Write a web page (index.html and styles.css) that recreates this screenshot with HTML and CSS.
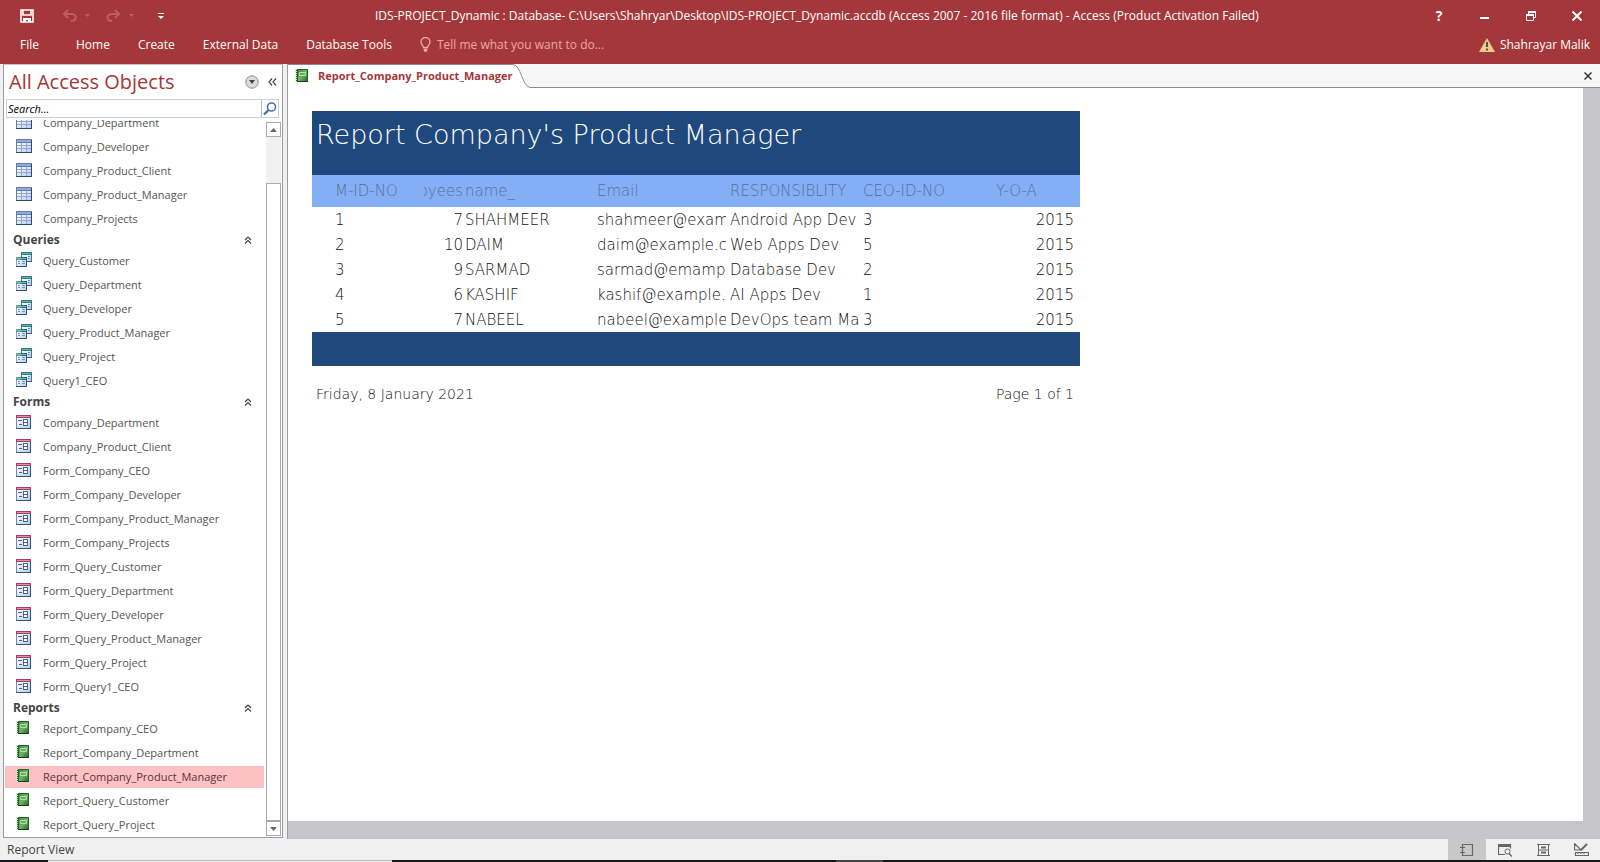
FILE: index.html
```html
<!DOCTYPE html>
<html lang="en">
<head>
<meta charset="utf-8">
<title>IDS-PROJECT_Dynamic - Access</title>
<link rel="stylesheet" href="styles.css">
</head>
<body>
<svg class="defs" width="0" height="0" aria-hidden="true">
  <defs>
    <linearGradient id="cell" x1="0" y1="0" x2="1" y2="1"><stop offset="0" stop-color="#fff"/><stop offset="1" stop-color="#b9cdf0"/></linearGradient>
    <linearGradient id="book" x1="0" y1="0" x2="1" y2="1"><stop offset="0" stop-color="#3f8a3c"/><stop offset=".5" stop-color="#6db565"/><stop offset="1" stop-color="#2b6a2c"/></linearGradient>
  </defs>
  <symbol id="i-table" viewBox="0 0 16 14">
    <path d="M0 0h16v14H0z" fill="#5f7bb5"/><path d="M0 13h16v1H0zM15 1h1v13h-1z" fill="#2f4573"/>
    <path d="M1 1h14v2H1z" fill="#8fa8d8"/>
    <path d="M1 4h14v9H1z" fill="#8ea6d4"/>
    <path d="M1 4h4v2H1zM6 4h4v2H6zM11 4h4v2h-4zM1 7h4v2H1zM6 7h4v2H6zM11 7h4v2h-4zM1 10h4v3H1zM6 10h4v3H6zM11 10h4v3h-4z" fill="url(#cell)"/>
  </symbol>
  <symbol id="i-query" viewBox="0 0 16 15">
    <path d="M5 0h11v10H5z" fill="#3f6d86"/><path d="M5 0h11v3H5z" fill="#2f7f80"/><path d="M6 1h9v1H6z" fill="#67b0aa"/>
    <path d="M6 3h9v6H6z" fill="url(#cell)"/><path d="M12 4h2v1h-2zM12 6h2v1h-2z" fill="#6f8fc0"/>
    <path d="M0 5h11v10H0z" fill="#8fa5cc"/><path d="M0 14h11v1H0zM10 5h1v10h-1z" fill="#34507c"/><path d="M0 5h11v3H0z" fill="#5d9ea2"/><path d="M5 5h6v3H5z" fill="#1f6a68"/><path d="M1 6h9v1H1z" fill="#78bab2"/>
    <path d="M1 8h9v6H1z" fill="url(#cell)"/><path d="M2 9h2v1H2zM2 11h2v1H2zM6 9h3v1H6zM6 11h3v1H6z" fill="#6f8fc0"/>
  </symbol>
  <symbol id="i-form" viewBox="0 0 15 14">
    <path d="M0 0h15v14H0z" fill="#6f86ba"/><path d="M0 13h15v1H0zM14 3h1v11h-1z" fill="#34507c"/><path d="M0 0h15v3H0z" fill="#a93c68"/><path d="M1 1h13v1H1z" fill="#de8dab"/>
    <path d="M1 3h13v10H1z" fill="url(#cell)"/><path d="M2 5h4v1H2zM3 9h3v1H3zM7 4h5v4H7zM7 8h5v3H7z" fill="#485f9e"/><path d="M8 5h3v2H8zM8 8h3v2H8z" fill="#fff"/>
  </symbol>
  <symbol id="i-report" viewBox="0 0 13 14">
    <path d="M1 0h12v13H1z" fill="#265f2a"/><path d="M3 1h9v11H3z" fill="url(#book)"/>
    <path d="M4.500 3.500h6v3h-6z" fill="none" stroke="#b2e2a4"/>
    <path d="M1 0v13" stroke="#cfe4cb" stroke-width="2" stroke-dasharray="1 1"/><path d="M2 12.500h11" stroke="#1d3d20"/>
  </symbol>
  <symbol id="i-up2" viewBox="0 0 8 8"><path d="M1 4l3-3 3 3M1 7.500l3-3 3 3" fill="none" stroke="#444" stroke-width="1.200"/></symbol>
</svg>

<header class="ribbon">
  <div class="titlebar">
    <div class="quick">
      <button class="q-save" aria-label="Save"><svg width="14" height="14" viewBox="0 0 14 14"><path d="M1 1h12v12H1zM3 1v5h8V1" fill="none" stroke="#fff" stroke-width="1.600"/><path d="M3 9h8v4H8v-2H6v2H3z" fill="#fff"/></svg></button>
      <button class="q-undo" aria-label="Undo"><svg width="30" height="14" viewBox="0 0 30 14"><path d="M6 1L2 5l4 4M2 5h8c5 0 5 7-1 7" fill="none" stroke="#bb5f62" stroke-width="2"/><path d="M23 5h5l-2.500 3z" fill="#bb5f62"/></svg></button>
      <button class="q-redo" aria-label="Redo"><svg width="30" height="14" viewBox="0 0 30 14"><path d="M9 1l4 4-4 4M13 5H6C0 5 0 12 6 12" fill="none" stroke="#bb5f62" stroke-width="2"/><path d="M23 5h5l-2.500 3z" fill="#bb5f62"/></svg></button>
      <button class="q-more" aria-label="Customize toolbar"><svg width="6" height="6" viewBox="0 0 6 6"><path d="M0 0h6v1H0zM0 3h6L3 6z" fill="#fff"/></svg></button>
    </div>
    <h1 class="title">IDS-PROJECT_Dynamic : Database- C:\Users\Shahryar\Desktop\IDS-PROJECT_Dynamic.accdb (Access 2007 - 2016 file format) - Access (Product Activation Failed)</h1>
    <div class="window">
      <button class="help">?</button>
      <button aria-label="Minimize"><svg width="10" height="10" viewBox="0 0 10 10"><path d="M0 6h9v2H0z" fill="#fff"/></svg></button>
      <button aria-label="Restore"><svg width="10" height="10" viewBox="0 0 10 10"><path d="M.5 4h7v5.500h-7zM2.500 4V1h7v5.500h-2" fill="none" stroke="#fff"/><path d="M2 0h8v2H2zM0 3h8v2H0z" fill="#fff"/></svg></button>
      <button aria-label="Close"><svg width="10" height="10" viewBox="0 0 10 10"><path d="M.5.5l9 9M9.500.5l-9 9" stroke="#fff" stroke-width="2"/></svg></button>
    </div>
  </div>
  <nav class="menu">
    <a class="file" href="#">File</a><a class="home" href="#">Home</a><a class="create" href="#">Create</a><a class="ext" href="#">External Data</a><a class="tools" href="#">Database Tools</a>
    <label class="tell"><svg width="11" height="15" viewBox="0 0 11 15"><path d="M3.500 10.500c0-2-2.500-3-2.500-5.500a4.500 4.500 0 0 1 9 0c0 2.500-2.500 3.500-2.500 5.500zM3.500 12.500h4M4 14h3" fill="none" stroke="#e8a9a9" stroke-width="1.300"/></svg><input type="text" placeholder="Tell me what you want to do..." aria-label="Tell me what you want to do"></label>
    <a class="user" href="#"><svg width="16" height="14" viewBox="0 0 16 14"><path d="M8 0l8 14H0z" fill="#f1c98e"/><path d="M7 4h2v5H7zM7 10.500h2v2H7z" fill="#4e5f23"/></svg>Shahrayar Malik</a>
  </nav>
</header>

<div class="workspace">
  <aside class="objects">
    <div class="o-head">
      <h2>All Access Objects</h2>
      <button aria-label="Filter"><svg width="14" height="14" viewBox="0 0 14 14"><circle cx="7" cy="7" r="6.200" fill="#d9dce1" stroke="#8b8e95"/><path d="M4 5h6L7 9z" fill="#444"/></svg></button>
      <button aria-label="Collapse pane"><svg width="9" height="8" viewBox="0 0 9 8"><path d="M4 .5L1 4l3 3.500M8 .5L5 4l3 3.500" fill="none" stroke="#444" stroke-width="1.200"/></svg></button>
    </div>
    <div class="search">
      <input type="text" placeholder="Search..." aria-label="Search">
      <button aria-label="Find"><svg width="14" height="14" viewBox="0 0 14 14"><circle cx="8.500" cy="5" r="4" fill="#fff" stroke="#4774ad" stroke-width="1.600"/><path d="M5.500 8L1 12.500" stroke="#4774ad" stroke-width="2.400"/></svg></button>
    </div>
    <div class="o-body">
      <div class="list">
        <ul>
          <li><svg class="t"><use href="#i-table"/></svg>Company_Department</li>
          <li><svg class="t"><use href="#i-table"/></svg>Company_Developer</li>
          <li><svg class="t"><use href="#i-table"/></svg>Company_Product_Client</li>
          <li><svg class="t"><use href="#i-table"/></svg>Company_Product_Manager</li>
          <li><svg class="t"><use href="#i-table"/></svg>Company_Projects</li>
        </ul>
        <h3>Queries<svg><use href="#i-up2"/></svg></h3>
        <ul>
          <li><svg class="q"><use href="#i-query"/></svg>Query_Customer</li>
          <li><svg class="q"><use href="#i-query"/></svg>Query_Department</li>
          <li><svg class="q"><use href="#i-query"/></svg>Query_Developer</li>
          <li><svg class="q"><use href="#i-query"/></svg>Query_Product_Manager</li>
          <li><svg class="q"><use href="#i-query"/></svg>Query_Project</li>
          <li><svg class="q"><use href="#i-query"/></svg>Query1_CEO</li>
        </ul>
        <h3>Forms<svg><use href="#i-up2"/></svg></h3>
        <ul>
          <li><svg class="f"><use href="#i-form"/></svg>Company_Department</li>
          <li><svg class="f"><use href="#i-form"/></svg>Company_Product_Client</li>
          <li><svg class="f"><use href="#i-form"/></svg>Form_Company_CEO</li>
          <li><svg class="f"><use href="#i-form"/></svg>Form_Company_Developer</li>
          <li><svg class="f"><use href="#i-form"/></svg>Form_Company_Product_Manager</li>
          <li><svg class="f"><use href="#i-form"/></svg>Form_Company_Projects</li>
          <li><svg class="f"><use href="#i-form"/></svg>Form_Query_Customer</li>
          <li><svg class="f"><use href="#i-form"/></svg>Form_Query_Department</li>
          <li><svg class="f"><use href="#i-form"/></svg>Form_Query_Developer</li>
          <li><svg class="f"><use href="#i-form"/></svg>Form_Query_Product_Manager</li>
          <li><svg class="f"><use href="#i-form"/></svg>Form_Query_Project</li>
          <li><svg class="f"><use href="#i-form"/></svg>Form_Query1_CEO</li>
        </ul>
        <h3>Reports<svg><use href="#i-up2"/></svg></h3>
        <ul>
          <li><svg class="r"><use href="#i-report"/></svg>Report_Company_CEO</li>
          <li><svg class="r"><use href="#i-report"/></svg>Report_Company_Department</li>
          <li class="on"><svg class="r"><use href="#i-report"/></svg>Report_Company_Product_Manager</li>
          <li><svg class="r"><use href="#i-report"/></svg>Report_Query_Customer</li>
          <li><svg class="r"><use href="#i-report"/></svg>Report_Query_Project</li>
        </ul>
      </div>
      <div class="scroll">
        <button aria-label="Scroll up"><svg width="7" height="4" viewBox="0 0 7 4"><path d="M0 4h7L3.500 0z" fill="#666"/></svg></button>
        <div class="thumb"></div>
        <button aria-label="Scroll down"><svg width="7" height="4" viewBox="0 0 7 4"><path d="M0 0h7L3.500 4z" fill="#666"/></svg></button>
      </div>
    </div>
  </aside>

  <main class="doc">
    <div class="tabs">
      <a class="tab" href="#"><svg class="r"><use href="#i-report"/></svg>Report_Company_Product_Manager</a>
      <svg class="slope" width="20" height="24" viewBox="0 0 20 24"><path d="M0 .5c8 0 9 22 17 22.500h3v1H0z" fill="#fff"/><path d="M0 .5c8 0 9 22 17 23h3" fill="none" stroke="#8b8b90"/></svg>
      <div class="rest"><button aria-label="Close tab"><svg width="8" height="8" viewBox="0 0 8 8"><path d="M.5.5l7 7M7.500.5l-7 7" stroke="#333" stroke-width="1.500"/></svg></button></div>
    </div>
    <div class="canvas">
      <div class="page">
        <article class="report">
          <h2>Report Company's Product Manager</h2>
          <table>
            <colgroup><col class="c0"><col class="c1"><col class="c2"><col class="c3"><col class="c3"><col class="c3"><col class="c4"></colgroup>
            <thead><tr><th>M-ID-NO</th><th class="num"><span>Employees</span></th><th>name_</th><th>Email</th><th>RESPONSIBLITY</th><th>CEO-ID-NO</th><th>Y-O-A</th></tr></thead>
            <tbody>
              <tr><td>1</td><td class="num"><span>7</span></td><td>SHAHMEER</td><td>shahmeer@example.com</td><td>Android App Dev</td><td>3</td><td class="year">2015</td></tr>
              <tr><td>2</td><td class="num"><span>10</span></td><td>DAIM</td><td>daim@example.com</td><td>Web Apps Dev</td><td>5</td><td class="year">2015</td></tr>
              <tr><td>3</td><td class="num"><span>9</span></td><td>SARMAD</td><td>sarmad@emample.com</td><td>Database Dev</td><td>2</td><td class="year">2015</td></tr>
              <tr><td>4</td><td class="num"><span>6</span></td><td>KASHIF</td><td>kashif@example.com</td><td>AI Apps Dev</td><td>1</td><td class="year">2015</td></tr>
              <tr><td>5</td><td class="num"><span>7</span></td><td>NABEEL</td><td>nabeel@example.com</td><td>DevOps team Manager</td><td>3</td><td class="year">2015</td></tr>
            </tbody>
          </table>
          <div class="band"></div>
          <footer><span>Friday, 8 January 2021</span><span>Page 1 of 1</span></footer>
        </article>
      </div>
    </div>
  </main>
</div>

<footer class="status">
  <span>Report View</span>
  <div class="views">
    <button class="on" aria-label="Report View"><svg width="14" height="14" viewBox="0 0 14 14"><path d="M2.500 1.500h10v11h-10zM0 4.500h5M0 9.500h5" fill="none" stroke="#666" stroke-width="1.200"/></svg></button>
    <button aria-label="Print Preview"><svg width="14" height="14" viewBox="0 0 14 14"><path d="M7 11.500H.5v-10h12v4" fill="none" stroke="#666" stroke-width="1.200"/><path d="M0 1h13v3H0z" fill="#666"/><circle cx="9.500" cy="8.500" r="2.500" fill="none" stroke="#666"/><path d="M11 10.500l3 3" stroke="#666" stroke-width="1.500"/></svg></button>
    <button aria-label="Layout View"><svg width="13" height="14" viewBox="0 0 13 14"><path d="M0 1.500h13M0 12.500h13M1.500 1.500v11M11.500 1.500v11M1.500 7h10" fill="none" stroke="#666"/><path d="M4 4.500h5M4 9.500h5" fill="none" stroke="#666" stroke-width="2"/></svg></button>
    <button aria-label="Design View"><svg width="15" height="14" viewBox="0 0 15 14"><path d="M.5.500v6.500H7zM1.500 9.500h13v3h-13zM4 9.500v1.500M7 9.500v1.500M10 9.500v1.500" fill="none" stroke="#666" stroke-width="1.200"/><path d="M7 7l6-6" stroke="#666" stroke-width="2"/></svg></button>
  </div>
</footer>
<div class="taskbar"><i class="start"></i><i class="find"></i><i class="mid"></i><i class="active"></i></div>
</body>
</html>
```
FILE: styles.css
```css
* { box-sizing: border-box; }
body { margin: 0; height: 100vh; display: flex; flex-direction: column; overflow: hidden; background: #f0f0f0; font: 12px/16px "Open Sans", "Noto Sans", sans-serif; color: #444; }
h1, h2, h3, ul { margin: 0; padding: 0; font-weight: 400; list-style: none; }
button { margin: 0; padding: 0; border: 0; background: none; font: inherit; color: inherit; display: flex; align-items: center; justify-content: center; }
a { color: inherit; text-decoration: none; }
svg { display: block; flex: none; }
.defs { position: absolute; }

.ribbon { background: #a4373a; color: #fff; height: 64px; }
.titlebar { display: flex; align-items: center; height: 32px; }
.quick { display: flex; align-items: center; width: 375px; padding-left: 20px; }
.q-undo { margin-left: 28px; }
.q-redo { margin-left: 14px; }
.q-more { margin-left: 22px; }
.title { flex: 1; font-size: 12px; white-space: nowrap; }
.window { display: flex; }
.window button { width: 46px; height: 30px; }
.window .help { font-weight: 700; font-size: 14px; }
.menu { display: flex; align-items: center; height: 26px; padding: 0 10px 0 20px; white-space: nowrap; }
.home { margin-left: 37px; }
.create { margin-left: 28px; }
.ext { margin-left: 28px; }
.tools { margin-left: 28px; }
.tell { display: flex; gap: 6px; margin-left: 28px; flex: 1; }
.tell input { flex: 1; border: 0; padding: 0; background: none; font: inherit; color: #fff; }
.tell input::placeholder { color: #e8a9a9; opacity: 1; }
.user { display: flex; align-items: center; gap: 5px; }

.workspace { flex: 1; min-height: 0; display: flex; }
.objects { width: 280px; margin: 0 4px 1px 3px; border: 1px solid #9a9ca2; border-top-color: #c4c5c9; background: #fff; display: flex; flex-direction: column; }
.o-head { display: flex; align-items: center; height: 34px; padding: 0 5px; gap: 9px; }
.o-head h2 { flex: 1; font-size: 20px; line-height: 28px; color: #a4373a; white-space: nowrap; }
.search { display: flex; height: 19px; margin: 0 3px 2px 2px; border: 1px solid #c6d0dd; }
.search input { flex: 1; min-width: 0; border: 0; padding: 0 1px; font: italic 11px/16px "Open Sans", "Noto Sans", sans-serif; }
.search input::placeholder { color: #000; opacity: 1; }
.search button { width: 17px; border-left: 1px solid #9fc0e2; }
.o-body { flex: 1; min-height: 0; display: flex; }
.list { flex: 1; overflow: hidden; display: flex; flex-direction: column; justify-content: flex-end; padding: 0 2px 0 1px; }
.list ul, .list h3 { flex: none; }
.list li { display: flex; align-items: center; height: 24px; padding-left: 11px; font-size: 11px; color: #555; white-space: nowrap; border: solid transparent; border-width: 1px 0; background-clip: padding-box; }
.list li svg { margin-bottom: 3px; }
.list li.on { background-color: #fdc1c4; color: #5a3336; }
.list h3 { display: flex; align-items: center; justify-content: space-between; height: 18px; padding: 0 12px 0 8px; font-weight: 700; font-size: 12px; }
.list h3 svg { width: 8px; height: 8px; }
.t { width: 16px; height: 14px; margin-right: 11px; }
.q { width: 16px; height: 15px; margin-right: 11px; }
.f { width: 15px; height: 14px; margin-right: 12px; }
.r { width: 13px; height: 14px; margin-right: 14px; }
.scroll { width: 15px; margin: 2px 1px 1px 0; display: flex; flex-direction: column; background: #f0f0f0; }
.scroll button { height: 15px; border: 1px solid #a9a9ad; background: #fff; }
.thumb { flex: 1; margin-top: 46px; border: 1px solid #a9a9ad; background: #fff; }

.doc { flex: 1; min-width: 0; display: flex; flex-direction: column; border-left: 1px solid #9a9ca2; }
.tabs { display: flex; height: 24px; background: #f7f7f7; }
.tab { display: flex; align-items: center; padding: 0 0 2px 7px; background: #fff; border-top: 1px solid #8b8b90; color: #a4373a; font-weight: 700; font-size: 11px; }
.tab .r { margin-right: 10px; }
.rest { flex: 1; display: flex; justify-content: flex-end; align-items: center; padding-right: 8px; border-bottom: 1px solid #8b8b90; }
.canvas { flex: 1; background: #c5c5ca; padding: 0 17px 18px 0; display: flex; }
.page { flex: 1; background: #fff; padding: 23px 24px; }

.report { width: 768px; font: 15px/24px "DejaVu Sans", sans-serif; font-weight: 200; color: #111; }
.report h2 { height: 64px; padding: 6px 4px; background: #1f497d; color: #fff; font-size: 27px; line-height: 36px; font-weight: 200; }
.report table { width: 100%; table-layout: fixed; border-collapse: separate; border-spacing: 0; }
.c0 { width: 112px; }
.c1 { width: 39px; }
.c2 { width: 132px; }
.c3 { width: 133px; }
.report th, .report td { padding: 0 0 0 2px; border-right: 2px solid transparent; text-align: left; font-weight: 200; white-space: nowrap; overflow: hidden; height: 25px; }
.report th:first-child, .report td:first-child { padding-left: 23px; }
.report th { height: 32px; background: #84aef5; color: #5c6f90; }
.report th.num, .report td.num { padding: 0; border: 0; }
.num span { display: flex; justify-content: flex-end; overflow: hidden; }
.report td.year { text-align: right; padding-right: 4px; }
.band { height: 34px; background: #1f497d; }
.report footer { display: flex; justify-content: space-between; padding: 16px 6px 0 4px; font-size: 14px; }

.status { display: flex; align-items: center; justify-content: space-between; height: 21px; padding-left: 7px; background: #f0f0f0; }
.views { display: flex; align-self: stretch; }
.views button { width: 38px; }
.views .on { background: #c8c8c8; }
.taskbar { display: flex; height: 2px; background: #1a1718; }
.start { width: 28px; flex: none; margin-right: 20px; }
.find { width: 344px; background: #f0f0f0; border-top: 1px solid #bbb; }
.mid { width: 444px; }
.active { width: 47px; background: #444; }
```
